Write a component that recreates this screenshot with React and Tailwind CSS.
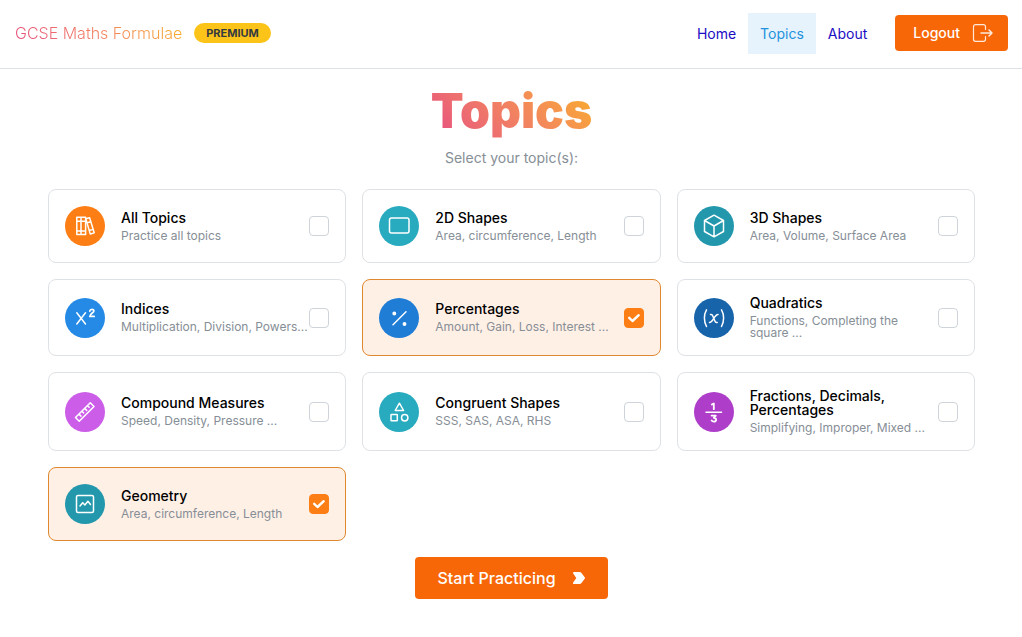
import { useState } from "react";

const stroke = {
  viewBox: "0 0 24 24",
  fill: "none",
  stroke: "currentColor",
  strokeWidth: 1.5,
  strokeLinecap: "round",
  strokeLinejoin: "round",
  "aria-hidden": true,
};

const BooksIcon = () => (
  <svg {...stroke} className="size-6">
    <path d="M3.800 3.200h4.200v17.300H3.800zM8 3.200h4.600v17.300H8M3.800 7.200H8M8 7.200h4.600M3.800 17H8M8 17h4.600" />
    <path d="M12.800 4.800l3.800-1 4.600 15-3.900 1.300zM14.200 8.800l3.700-1M16.200 16.500l4-1.100" />
  </svg>
);

const RectangleIcon = () => (
  <svg {...stroke} className="size-6">
    <rect x="2.500" y="4" width="19.500" height="15" rx="2" />
  </svg>
);

const CubeIcon = () => (
  <svg {...stroke} className="size-6">
    <path d="M12 1.200l9.500 5.300v11L12 22.800l-9.500-5.300v-11zM12 12l9.500-5.500M12 12v10.800M12 12L2.500 6.500" />
  </svg>
);

const SuperscriptIcon = () => (
  <svg {...stroke} className="size-6">
    <path d="M3.800 6.800l8.700 11.200M12.500 6.800L3.800 18" />
    <path strokeWidth="1.700" d="M16.800 5.100c.2-1.200 1-1.800 2.100-1.800 1.200 0 2 .7 2 1.700 0 1.500-4.100 2.900-4.100 5.400H21.200" />
  </svg>
);

const PercentIcon = () => (
  <svg {...stroke} className="size-6">
    <path d="M6 18.800L19 5.800" />
    <circle cx="7.300" cy="7.500" r="1.200" fill="currentColor" />
    <circle cx="17.500" cy="18" r="1.200" fill="currentColor" />
  </svg>
);

const FunctionIcon = () => (
  <svg {...stroke} className="size-6">
    <path d="M4.500 3.800C1.700 8.500 1.700 15.500 4.500 20.500M19.500 3.800c2.800 4.700 2.800 11.700 0 16.700" />
    <path d="M8.500 8.500h.7c.8 0 1.200.4 1.500 1.200l2.300 5.600c.3.800.7 1.200 1.500 1.200h.7M7.500 16.500c1.800 0 2.900-2 4.200-4S14.300 8.500 16 8.500" />
  </svg>
);

const RulerIcon = () => (
  <svg {...stroke} className="size-6">
    <path d="M17.300 2.800l3.700 3.700L6.200 21.200l-3.700-3.700zM14.500 5.600l1.700 1.700M11.700 8.400l2 2M8.900 11.200l1.700 1.700M6 14.100l2 2" />
  </svg>
);

const ShapesIcon = () => (
  <svg {...stroke} className="size-6">
    <path d="M12.400 3.200l4.200 7.300H8.200z" />
    <rect x="4" y="14.500" width="6.300" height="6.300" rx=".5" />
    <circle cx="17.700" cy="17.700" r="3.200" />
  </svg>
);

const FractionIcon = () => (
  <svg {...stroke} className="size-6">
    <path d="M4 12.300h15.500" />
    <path strokeWidth="1.800" d="M9.800 4.600l2-1.200v5.800" />
    <path strokeWidth="1.800" d="M9.600 15.600h4.200l-2 2.300c1.500 0 2.300.8 2.300 1.800 0 1.200-1 1.900-2.200 1.900-1 0-1.800-.4-2.300-1.100" />
  </svg>
);

const GraphIcon = () => (
  <svg {...stroke} className="size-6">
    <rect x="3.500" y="3.500" width="17" height="17" rx="1.500" />
    <path d="M7 14l2.700-3.300 2.200 2.300 3-3.700 2.600 3.200" />
  </svg>
);

const LogoutIcon = () => (
  <svg {...stroke} strokeWidth={1.2} className="size-6 opacity-85">
    <path d="M15.500 8.500V5.700a2 2 0 0 0-2-2H5.500a2 2 0 0 0-2 2v12.600a2 2 0 0 0 2 2h8a2 2 0 0 0 2-2V15.500" />
    <path strokeWidth="1.500" d="M11 12H22M19 9l3 3-3 3" />
  </svg>
);

const ChevronIcon = () => (
  <svg viewBox="0 0 14 14" className="size-3.5" fill="currentColor" aria-hidden="true">
    <path d="M2 1h5.500c.8 0 1.500.3 2 .9l3.200 4.300c.4.500.4 1.100 0 1.600l-3.200 4.300c-.5.600-1.200.9-2 .9H2c-.9 0-1.300-.9-.8-1.600L4.300 7 1.200 2.600C.7 1.900 1.100 1 2 1z" />
  </svg>
);

const TOPICS = [
  { title: "All Topics", detail: "Practice all topics", color: "bg-[#fd7e14]", Icon: BooksIcon },
  { title: "2D Shapes", detail: "Area, circumference, Length", color: "bg-[#28aabf]", Icon: RectangleIcon },
  { title: "3D Shapes", detail: "Area, Volume, Surface Area", color: "bg-[#2398ad]", Icon: CubeIcon },
  { title: "Indices", detail: "Multiplication, Division, Powers...", color: "bg-[#248ae6]", Icon: SuperscriptIcon },
  { title: "Percentages", detail: "Amount, Gain, Loss, Interest ...", color: "bg-[#1f7dd6]", Icon: PercentIcon },
  { title: "Quadratics", detail: "Functions, Completing the square ...", color: "bg-[#1864ab]", Icon: FunctionIcon },
  { title: "Compound Measures", detail: "Speed, Density, Pressure ...", color: "bg-[#cc5de8]", Icon: RulerIcon },
  { title: "Congruent Shapes", detail: "SSS, SAS, ASA, RHS", color: "bg-[#28aabf]", Icon: ShapesIcon },
  { title: "Fractions, Decimals, Percentages", detail: "Simplifying, Improper, Mixed ...", color: "bg-[#ae3ec9]", Icon: FractionIcon },
  { title: "Geometry", detail: "Area, circumference, Length", color: "bg-[#2398ad]", Icon: GraphIcon },
];

function TopicCard({ topic, checked, onChange }) {
  const { title, detail, color, Icon } = topic;
  return (
    <label className="flex cursor-pointer items-center rounded-lg border border-[#dee2e6] bg-white p-4 has-checked:border-[#e0882f] has-checked:bg-[#fff0e6]">
      <span className={`flex size-10 shrink-0 items-center justify-center rounded-full text-white ${color}`}>
        <Icon />
      </span>
      <span className="ml-4 flex min-w-0 flex-1 flex-col gap-[5px]">
        <span className="text-sm leading-[14px] font-medium text-black">{title}</span>
        <span className="text-xs leading-[12px] text-[#868e96]">{detail}</span>
      </span>
      <span className="grid size-5 shrink-0">
        <input
          type="checkbox"
          checked={checked}
          onChange={onChange}
          className="peer col-start-1 row-start-1 size-5 cursor-pointer appearance-none rounded border border-[#ced4da] bg-white checked:border-[#fd7e14] checked:bg-[#fd7e14]"
        />
        <svg
          viewBox="0 0 20 20"
          className="pointer-events-none invisible col-start-1 row-start-1 size-5 text-white peer-checked:visible"
          fill="none"
          stroke="currentColor"
          strokeWidth="2.400"
          strokeLinecap="round"
          strokeLinejoin="round"
          aria-hidden="true"
        >
          <path d="M5.200 9.800l3.300 3.200 6.200-5.800" />
        </svg>
      </span>
    </label>
  );
}

export default function App() {
  const [selected, setSelected] = useState(["Percentages", "Geometry"]);
  const toggle = (title) =>
    setSelected((list) => (list.includes(title) ? list.filter((t) => t !== title) : [...list, title]));

  return (
    <div className="min-h-screen bg-white font-['Inter',sans-serif] text-black">
      <header className="flex h-[69px] items-center justify-between border-b border-[#dee2e6] pr-3.5 pb-0.5 pl-[15px]">
        <div className="flex items-center gap-3">
          <span className="bg-linear-45 from-[#e64980] to-[#fab005] bg-clip-text text-base font-light text-transparent">
            GCSE Maths Formulae
          </span>
          <span className="flex h-5 items-center rounded-full bg-[#fcc419] px-3 text-[11px] font-bold text-[#343a40]">
            PREMIUM
          </span>
        </div>
        <div className="flex items-center gap-4">
          <nav className="flex items-center text-sm">
            <a href="#home" className="px-3 py-2.5 leading-[21px] text-[#1a0dc4]">Home</a>
            <a href="#topics" aria-current="page" className="bg-[#e7f3fc] px-3 py-2.5 leading-[21px] text-[#2292dc]">Topics</a>
            <a href="#about" className="px-3 py-2.5 leading-[21px] text-[#1a0dc4]">About</a>
          </nav>
          <button type="button" className="flex h-9 items-center gap-2.5 rounded bg-[#f76707] px-[18px] pr-3.5 text-sm font-medium text-white">
            Logout
            <LogoutIcon />
          </button>
        </div>
      </header>

      <main className="flex flex-col pr-[47px] pb-10 pl-12">
        <h1 className="mt-[11px] self-center bg-linear-45 from-[#e64980] to-[#fab005] bg-clip-text text-5xl leading-[62px] font-black text-transparent">
          Topics
        </h1>
        <p className="mt-[5px] text-center text-sm leading-[22px] text-[#868e96]">Select your topic(s):</p>
        <div className="mt-5 grid grid-cols-3 gap-4">
          {TOPICS.map((topic) => (
            <TopicCard
              key={topic.title}
              topic={topic}
              checked={selected.includes(topic.title)}
              onChange={() => toggle(topic.title)}
            />
          ))}
        </div>
        <button type="button" className="mt-4 flex h-[42px] items-center gap-4 self-center rounded bg-[#f76707] px-[22px] text-base font-medium text-white">
          Start Practicing
          <ChevronIcon />
        </button>
      </main>
    </div>
  );
}
